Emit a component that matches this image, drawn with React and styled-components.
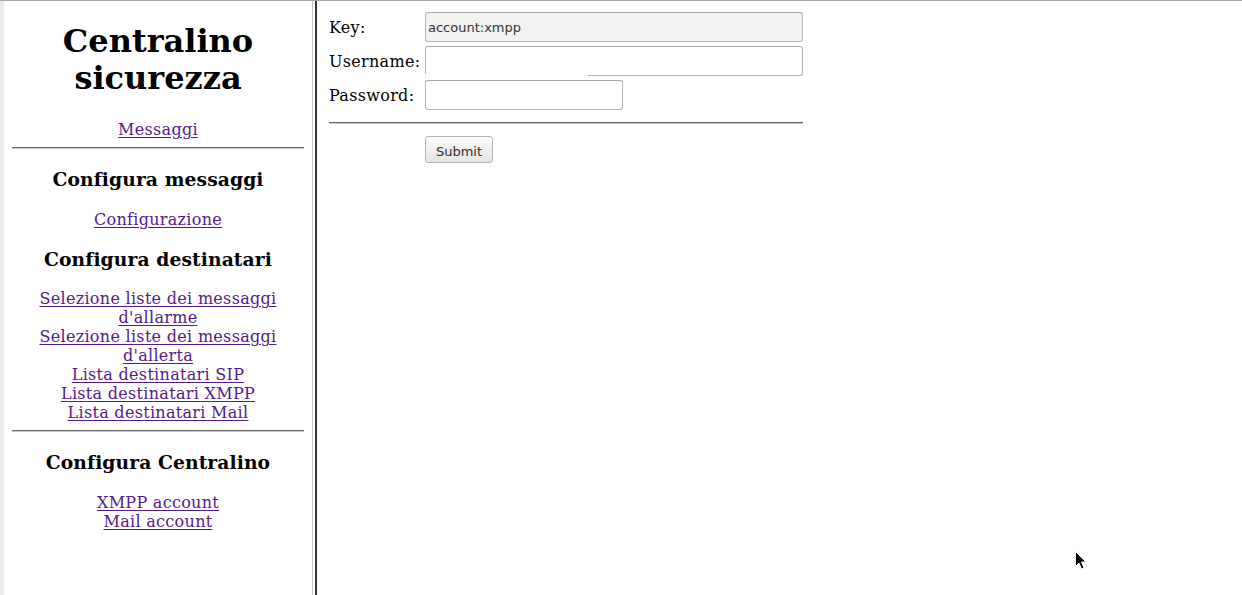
import React from 'react';
import styled, { createGlobalStyle } from 'styled-components';

const GlobalStyle = createGlobalStyle`
    html, body {
        margin: 0;
        padding: 0;
        background: #ffffff;
    }
`

const Page = styled.div`
    position: relative;
    display: flex;
    flex-direction: row;
    height: 594px;
    border-top: 1px solid #a6a6a6;
    font-family: "DejaVu Serif", serif;
    color: #000000;
    overflow: hidden;
`

const LeftFrame = styled.div`
    width: 292px;
    flex: none;
    border-left: 4px solid #ececec;
    padding: 0 8px;
    text-align: center;
`

const FrameBorder = styled.div`
    width: 5px;
    flex: none;
    background: linear-gradient(to right, #c4c4c4 0 1px, #ffffff 1px 3px, #333333 3px 5px);
`

const RightFrame = styled.div`
    flex: 1;
    padding: 11px 12px;
`

const Title = styled.h1`
    font-size: 32px;
    font-weight: bold;
    line-height: 37px;
    margin: 22px 0 23px;
`

const Section = styled.h3`
    font-size: 18.7px;
    font-weight: bold;
    line-height: 22px;
    margin: 19.3px 0;
    letter-spacing: 0.1px;
`

const Links = styled.div`
    font-size: 16px;
    line-height: 19px;
    letter-spacing: 0.3px;
`

const NavLink = styled.a`
    display: block;
    color: #551a8b;
    text-decoration: underline;
    text-underline-offset: 2px;
    cursor: pointer;
`

const Rule = styled.hr`
    margin: 8px 0;
    border: none;
    border-top: 1px solid #6a6a6a;
    border-bottom: 1px solid #c8c8c8;
    height: 0;
`

const Form = styled.div`
    display: grid;
    grid-template-columns: 96px 378px;
    grid-auto-rows: 30px;
    row-gap: 4px;
    align-items: center;
`

const Label = styled.div`
    font-size: 16px;
    line-height: 19px;
    letter-spacing: 0.3px;
`

const FieldWrap = styled.div`
    position: relative;
    height: 30px;

    &::after {
        content: "";
        display: ${props => props.$patch ? 'block' : 'none'};
        position: absolute;
        left: 0;
        bottom: 0;
        width: 163px;
        height: 2px;
        background: #ffffff;
    }
`

const Field = styled.input`
    box-sizing: border-box;
    width: ${props => props.$width || 378}px;
    height: 30px;
    margin: 0;
    padding: 0 2px;
    font-family: "DejaVu Sans", sans-serif;
    font-size: 13px;
    color: #333333;
    background: ${props => props.readOnly ? '#f2f2f1' : '#ffffff'};
    border: 1px solid #b6b6b4;
    border-top-color: #a9a9a7;
    border-radius: 3px;
    outline: none;
`

const FormRule = styled(Rule)`
    width: 474px;
    margin: 12px 0;
`

const Actions = styled.div`
    padding-left: 96px;
`

const Button = styled.button`
    width: 68px;
    height: 27px;
    font-family: "DejaVu Sans", sans-serif;
    font-size: 13px;
    color: #2e2e2e;
    background: linear-gradient(to bottom, #fbfbfb, #e4e4e3);
    border: 1px solid #b4b4b2;
    border-radius: 3px;
    padding: 3px 0 0;
`

const Pointer = styled.svg`
    position: absolute;
    left: 1074px;
    top: 549px;
`

class App extends React.Component {

    render () {
        return (
            <Page>
                <GlobalStyle/>
                <LeftFrame>
                    <Title>Centralino<br/>sicurezza</Title>
                    <Links>
                        <NavLink>Messaggi</NavLink>
                    </Links>
                    <Rule/>
                    <Section>Configura messaggi</Section>
                    <Links>
                        <NavLink>Configurazione</NavLink>
                    </Links>
                    <Section>Configura destinatari</Section>
                    <Links>
                        <NavLink>Selezione liste dei messaggi d'allarme</NavLink>
                        <NavLink>Selezione liste dei messaggi d'allerta</NavLink>
                        <NavLink>Lista destinatari SIP</NavLink>
                        <NavLink>Lista destinatari XMPP</NavLink>
                        <NavLink>Lista destinatari Mail</NavLink>
                    </Links>
                    <Rule/>
                    <Section>Configura Centralino</Section>
                    <Links>
                        <NavLink>XMPP account</NavLink>
                        <NavLink>Mail account</NavLink>
                    </Links>
                </LeftFrame>
                <FrameBorder/>
                <RightFrame>
                    <Form>
                        <Label>Key:</Label>
                        <FieldWrap>
                            <Field readOnly defaultValue="account:xmpp"/>
                        </FieldWrap>
                        <Label>Username:</Label>
                        <FieldWrap $patch>
                            <Field/>
                        </FieldWrap>
                        <Label>Password:</Label>
                        <FieldWrap>
                            <Field type="password" $width={198}/>
                        </FieldWrap>
                    </Form>
                    <FormRule/>
                    <Actions>
                        <Button>Submit</Button>
                    </Actions>
                </RightFrame>
                <Pointer width="14" height="22" viewBox="0 0 14 22">
                    <path d="M1.5 1.5 L1.5 16.5 L5 13 L7.5 19 L10 18 L7.5 12 L12 12 Z" fill="#000" stroke="#fff" strokeWidth="1"/>
                </Pointer>
            </Page>
        )
    }
}

export default App
